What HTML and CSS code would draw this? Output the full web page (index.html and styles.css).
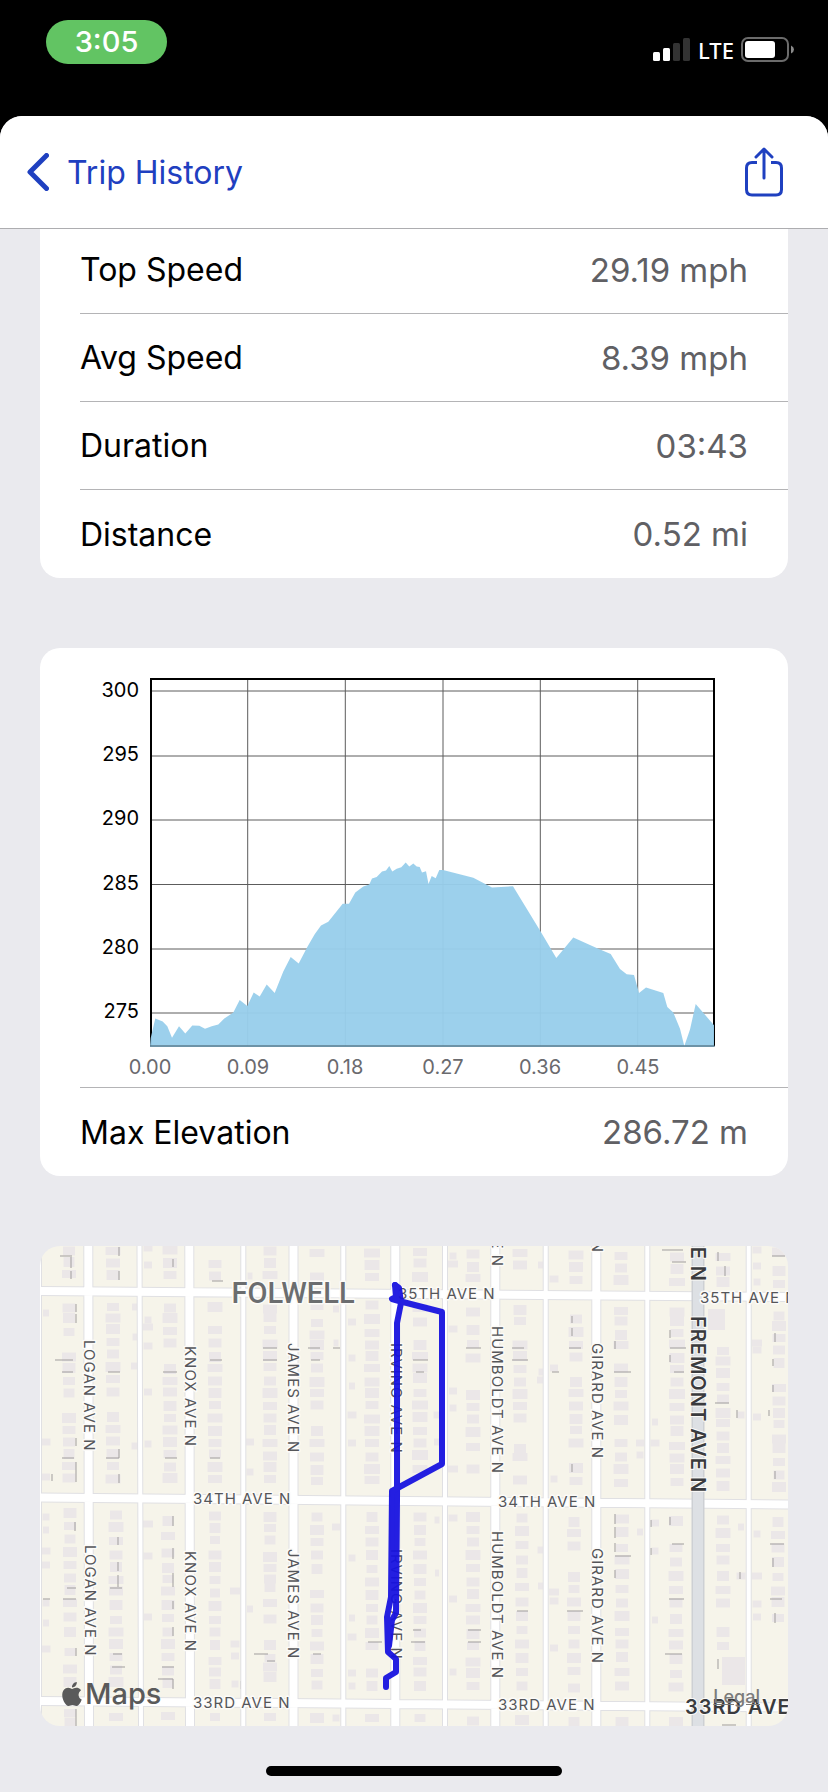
FILE: index.html
```html
<!DOCTYPE html>
<html lang="en">
  <head>
    <meta charset="utf-8" />
    <meta name="viewport" content="width=device-width, initial-scale=1.0" />
    <title>Trip History</title>
    <link rel="stylesheet" href="styles.css">
  </head>
  <body>
    <div class="status-bar">
      <span class="clock">3:05</span>
      <div class="status-icons">
        <svg width="38" height="24" viewBox="0 0 38 24" aria-hidden="true">
          <rect x="0" y="14" width="7" height="9" rx="1.5" fill="#fff" />
          <rect x="10" y="10" width="7" height="13" rx="1.5" fill="#fff" />
          <rect x="20" y="5" width="7" height="18" rx="1.5" fill="#333" />
          <rect x="30" y="0" width="7" height="23" rx="1.5" fill="#333" />
        </svg>
        <span class="network">LTE</span>
        <svg width="53" height="26" viewBox="0 0 53 26" aria-hidden="true">
          <rect x="1" y="1" width="46" height="23" rx="6" fill="none" stroke="#6b6b6b" stroke-width="2" />
          <rect x="4" y="4" width="30" height="17" rx="3" fill="#fff" />
          <path d="M50 8.500q3 1.500 3 4t-3 4z" fill="#8a8a8a" />
        </svg>
      </div>
    </div>

    <div class="sheet">
      <header class="nav">
        <button class="back-button" type="button">
          <svg width="22" height="38" viewBox="0 0 22 38" aria-hidden="true">
            <path d="M19.500 2.500L3 19l16.500 16.500" fill="none" stroke="currentColor" stroke-width="5" stroke-linecap="round" stroke-linejoin="round" />
          </svg>
          <span>Trip History</span>
        </button>
        <button class="share-button" type="button" aria-label="Share">
          <svg width="38" height="50" viewBox="0 0 38 50" fill="none" stroke="currentColor" stroke-width="3" stroke-linecap="round" stroke-linejoin="round" aria-hidden="true">
            <path d="M12 15.500H7q-5.500 0-5.500 5.500v21.500q0 5.500 5.500 5.500h24q5.500 0 5.500-5.500V21q0-5.500-5.500-5.500h-5" stroke-linecap="butt" />
            <path d="M19 31V2.500M11 10l8-8 8 8" />
          </svg>
        </button>
      </header>

      <main class="content">
        <dl class="card stats">
          <div class="row"><dt>Top Speed</dt><dd>29.19 mph</dd></div>
          <div class="row"><dt>Avg Speed</dt><dd>8.39 mph</dd></div>
          <div class="row"><dt>Duration</dt><dd>03:43</dd></div>
          <div class="row"><dt>Distance</dt><dd>0.52 mi</dd></div>
        </dl>

        <section class="card">
          <div class="chart">
            <svg viewBox="40 0 708 439" role="img" aria-label="Elevation over distance">
              <g class="grid">
                <path d="M110 43H674M110 108H674M110 172H674M110 236.500H674M110 301H674M110 365H674" />
                <path d="M207.700 30V398M305.300 30V398M403 30V398M500.300 30V398M597.700 30V398" />
              </g>
              <path class="frame" d="M111 398V31H674V398" />
              <path class="area" d="M110 399L110.700 390L115.300 370.500L122.700 373.600L127.300 378.200L132 389.800L139 378.200L145.300 385.600L152.300 377.500L159.300 377.800L165 380.700L171.700 378.200L178.300 376.400L184.300 370.500L193.300 364.500L199.700 351.900L207.300 357.900L213.700 344.500L219.700 348.400L226.700 336.500L234.700 344.900L243.300 323.500L250.700 309.100L258.700 315.400L267.300 298.900L274.700 286.300L281 277.500L288.300 273.700L295.300 264.900L302.700 255.800L309 255.800L315.300 244.600L323.300 238.600L329.300 236.500L332 230.500L336.700 229.100L342 223.500L346 222.500L349.300 217.900L352.300 223.500L356.700 220.700L361.300 219.300L365.700 214.400L369.300 218.600L373.300 215.400L376.700 218.600L379.700 219L382 224.600L386 223.200L388.500 236L391.700 228L395.700 230.200L399.300 222.100L403 222.100L433.300 229.800L452 239.600L473 238.200L500.300 283.100L516.300 310.100L533.300 289.500L558.300 300.700L570.700 305.900L580 321L586.700 326.300L594 327L599 344.900L606 339.600L623.300 344.900L627.300 358.900L633.300 364.500L640 380.700L644.300 398L650 381.400L655.700 356.100L674 377.200V399Z" />
              <path class="baseline" d="M110 398H675" />
              <g class="y-labels">
                <text x="99" y="49">300</text>
                <text x="99" y="113">295</text>
                <text x="99" y="177">290</text>
                <text x="99" y="242">285</text>
                <text x="99" y="306">280</text>
                <text x="99" y="370">275</text>
              </g>
              <g class="x-labels">
                <text x="110" y="426">0.00</text>
                <text x="208" y="426">0.09</text>
                <text x="305" y="426">0.18</text>
                <text x="403" y="426">0.27</text>
                <text x="500" y="426">0.36</text>
                <text x="598" y="426">0.45</text>
              </g>
            </svg>
          </div>
          <dl class="row"><dt>Max Elevation</dt><dd>286.72 m</dd></dl>
        </section>

        <section class="card map">
          <svg class="map-canvas" viewBox="0 0 748 480" role="img" aria-label="Trip route">
            <g id="houses"></g>
            <path class="shadows" d="M20 10h12M31 11v11M31 25v8M36 58v8M36 68v9M15 114h18M22 126h11M22 212h12M36 192v8M36 216v20M79 1v9M79 25v9M68 126h12M79 203v9M66 212h13M79 228v9M133 13v8M123 126h14M125 212h12M170 114h12M170 212h10M172 35h11M223 102h14M223 114h14M12 228v7
              M268 102h12M271 114h9M293 102h7M373 114h15M376 126h8M426 102h15M472 102h12M472 114h16M512 126h7
              M622 4h21M632 16h14M529 102h12M630 102h16M574 126h17M675 157h14M732 10h13M634 126h10M532 70v7M532 82v8M575 95v8M630 84v8M630 109v7M678 6v9M685 20v10M735 87v9M733 113v7M733 139v7M697 164v8M729 164v6M735 225v8M532 218v8
              M35 276v9M27 342h9M23 353h13M36 402v8M78 291v8M78 316v9M78 329v12M70 342h12M133 270v10M133 302v11M133 327v14M133 355v8M133 381v9M73 408h9M72 421h13M122 421h12M118 433h15M133 433v10M201 435v8M214 408h14M227 415h8M36 463v17M3 353h7
              M273 408h8M328 396h14M373 384h8M371 396h14M428 384h13M428 396h13M477 365h11
              M575 268v10M575 281v11M575 297v9M575 310h16M575 324v8M527 365h16M632 298h12M629 353h15M625 408h17M730 298h14M730 353h12M735 367v10M733 312v9M678 413v10M630 271v8M611 274v7M611 302v7M700 326v7M682 479h14" />
            <defs>
              <path id="streets" d="M0 45L748 51M0 251.500L748 258.500M0 455L748 461.500M48.300 0L49 480M149.300 0L150 480M253.500 0V480M355.300 0V480M455.300 0V480M556.300 0V480" />
              <path id="alleys" d="M-1 0V480M99.500 0L101 480M203.300 0V480M303.300 0V480M405 0V480M505.700 0V480M607.300 0V480M708.700 0V480" />
            </defs>
            <use href="#alleys" class="alley-edge" />
            <use href="#streets" class="street-edge" />
            <use href="#alleys" class="alley" />
            <use href="#streets" class="street" />
            <path class="avenue-edge" d="M658 0V480" />
            <path class="avenue" d="M658 0V480" />

            <g class="street-labels">
              <text transform="translate(44 94) rotate(90)">LOGAN AVE N</text>
              <text transform="translate(45 299) rotate(90)">LOGAN AVE N</text>
              <text transform="translate(145 100) rotate(90)">KNOX AVE N</text>
              <text transform="translate(145 305) rotate(90)">KNOX AVE N</text>
              <text transform="translate(248 97) rotate(90)">JAMES AVE N</text>
              <text transform="translate(248 303) rotate(90)">JAMES AVE N</text>
              <text transform="translate(351 97) rotate(90)">IRVING AVE N</text>
              <text transform="translate(351 303) rotate(90)">IRVING AVE N</text>
              <text transform="translate(452 21) rotate(90)" text-anchor="end">HUMBOLDT AVE N</text>
              <text transform="translate(452 80) rotate(90)">HUMBOLDT AVE N</text>
              <text transform="translate(452 285) rotate(90)">HUMBOLDT AVE N</text>
              <text transform="translate(552 7) rotate(90)" text-anchor="end">GIRARD AVE N</text>
              <text transform="translate(552 97) rotate(90)">GIRARD AVE N</text>
              <text transform="translate(552 302) rotate(90)">GIRARD AVE N</text>
              <text x="358" y="53">35TH AVE N</text>
              <text x="660" y="57">35TH AVE N</text>
              <text x="153" y="258">34TH AVE N</text>
              <text x="458" y="261">34TH AVE N</text>
              <text x="153" y="462">33RD AVE N</text>
              <text x="458" y="464">33RD AVE N</text>
            </g>
            <g class="major-labels">
              <text transform="translate(651 36) rotate(90)" text-anchor="end">FREMONT AVE N</text>
              <text transform="translate(651 70) rotate(90)">FREMONT AVE N</text>
              <text x="645" y="468">33RD AVE N</text>
            </g>
            <text class="district" x="253" y="57">FOLWELL</text>

            <g class="route">
              <path d="M355 39L359 42L361 57L357 77V254L356 367L352 374L349 400" />
              <path d="M355 39L356 51L352 53L359 55L402 66V218L352 245L351 351L347 371L348 406L356 413V426L346 432V441" />
            </g>
          </svg>
          <div class="map-logo">
            <svg width="24" height="24" viewBox="0 0 24 24" fill="currentColor" aria-hidden="true">
              <path d="M12.152 6.896c-.948 0-2.415-1.078-3.960-1.040-2.040.027-3.910 1.183-4.961 3.014-2.117 3.675-.546 9.103 1.519 12.090 1.013 1.454 2.208 3.090 3.792 3.039 1.520-.065 2.090-.987 3.935-.987 1.831 0 2.350.987 3.960.948 1.637-.026 2.676-1.480 3.676-2.948 1.156-1.688 1.636-3.325 1.662-3.415-.039-.013-3.182-1.221-3.220-4.857-.026-3.040 2.480-4.494 2.597-4.559-1.429-2.090-3.623-2.324-4.390-2.376-2-.156-3.675 1.090-4.610 1.090zM15.530 3.830c.843-1.012 1.400-2.427 1.245-3.830-1.207.052-2.662.805-3.532 1.818-.780.896-1.454 2.338-1.273 3.714 1.338.104 2.715-.688 3.559-1.701" />
            </svg>
            <span>Maps</span>
          </div>
          <a class="legal" href="#legal">Legal</a>
        </section>
      </main>

      <div class="home-indicator"></div>
    </div>

    <script src="map.js"></script>
  </body>
</html>
```
FILE: styles.css
```css
* {
  padding: 0;
  margin: 0;
  box-sizing: border-box;
}
body {
  min-height: 100vh;
  background-color: #000000;
  font-family: "Inter", "Liberation Sans", sans-serif;
  display: flex;
  flex-direction: column;
}
button {
  border: none;
  background: none;
  color: #1f40c0;
  font: inherit;
  cursor: pointer;
}
svg {
  display: block;
}

/* Status bar */
.status-bar {
  height: 116px;
  padding: 20px 34px 0 46px;
  display: flex;
  justify-content: space-between;
  align-items: flex-start;
  color: #ffffff;
}
.clock {
  width: 121px;
  height: 44px;
  border-radius: 22px;
  background-color: #62c463;
  font-size: 29px;
  font-weight: 500;
  line-height: 44px;
  text-align: center;
}
.status-icons {
  display: flex;
  align-items: center;
  gap: 7px;
  margin-top: 16px;
}
.network {
  font-family: "Noto Sans", sans-serif;
  font-size: 22px;
  font-weight: 500;
  line-height: 28px;
}

/* Sheet and navigation */
.sheet {
  flex: 1;
  background-color: #eaeaee;
  border-radius: 22px 22px 0 0;
  overflow: hidden;
}
.nav {
  position: relative;
  z-index: 1;
  height: 113px;
  padding: 0 45px 0 27px;
  display: flex;
  justify-content: space-between;
  align-items: center;
  background-color: #ffffff;
  border-bottom: 1px solid #adadb0;
}
.back-button {
  display: flex;
  align-items: center;
  gap: 18px;
  font-size: 32px;
}

/* Cards */
.content {
  display: flex;
  flex-direction: column;
  gap: 70px;
  padding: 0 40px 40px;
}
.card {
  background-color: #ffffff;
  border-radius: 20px;
  overflow: hidden;
}
/* first row is scrolled slightly under the nav bar */
.stats {
  margin-top: -3px;
  border-radius: 0 0 20px 20px;
}
.row {
  height: 88px;
  margin-left: 40px;
  padding-right: 40px;
  display: flex;
  justify-content: space-between;
  align-items: center;
  border-bottom: 1px solid #b4b4b6;
  font-size: 32px;
  color: #000000;
}
.row:last-child {
  border-bottom: none;
}
.row dd {
  font-size: 33px;
  color: #606064;
}

/* Elevation chart */
.chart {
  margin-left: 40px;
  border-bottom: 1px solid #b4b4b6;
}
.chart text {
  font-size: 20px;
}
.grid path {
  fill: none;
  stroke: #5c5c5c;
  stroke-width: 1;
}
.frame {
  fill: none;
  stroke: #000000;
  stroke-width: 2;
}
.area {
  fill: #98ceeb;
  fill-opacity: 0.96;
}
.baseline {
  stroke: #3f5663;
  stroke-width: 1;
}
.y-labels {
  text-anchor: end;
  fill: #000000;
}
.x-labels {
  text-anchor: middle;
  fill: #6a6a6e;
}

/* Map */
.map {
  position: relative;
  background-color: #f6f4ea;
}
#houses {
  fill: #ebe7e8;
}
.shadows {
  fill: none;
  stroke: #a09d9d;
  stroke-width: 1;
}
.street-edge,
.alley-edge {
  fill: none;
  stroke: #e0e0e3;
}
.street,
.alley {
  fill: none;
  stroke: #ffffff;
}
.street-edge {
  stroke-width: 10;
}
.street {
  stroke-width: 8;
}
.alley-edge {
  stroke-width: 6;
}
.alley {
  stroke-width: 4;
}
.avenue-edge {
  stroke: #cdd0d4;
  stroke-width: 13;
}
.avenue {
  stroke: #dde0e4;
  stroke-width: 10;
}
.street-labels,
.major-labels,
.district {
  paint-order: stroke;
  stroke: #fcfbf8;
  stroke-width: 3;
  stroke-linejoin: round;
}
.street-labels,
.major-labels {
  letter-spacing: 1px;
}
.street-labels {
  font-size: 15px;
  fill: #55565a;
}
.major-labels {
  font-size: 20px;
  font-weight: 600;
  stroke-width: 2;
  fill: #3a3b3e;
}
.district {
  font-family: "Roboto", sans-serif;
  font-size: 29px;
  font-weight: 500;
  text-anchor: middle;
  fill: #6b6d6f;
}
.route {
  opacity: 0.94;
}
.route path {
  fill: none;
  stroke: #1712e0;
  stroke-width: 6;
  stroke-linecap: round;
  stroke-linejoin: round;
}
.map-logo {
  position: absolute;
  left: 20px;
  bottom: 14px;
  display: flex;
  align-items: center;
  gap: 1px;
  color: #5a5a5a;
  font-size: 29px;
  font-weight: 500;
  line-height: 36px;
}
.legal {
  position: absolute;
  right: 28px;
  bottom: 17px;
  color: #7b7b7a;
  font-size: 18px;
  font-weight: 500;
  line-height: 24px;
}

.home-indicator {
  width: 296px;
  height: 10px;
  margin: 0 auto 16px;
  border-radius: 5px;
  background-color: #000000;
}
```
FILE: map.js
```js
// columns of houses: center x, width, list of center y
const columns = [
  [6, 7, [67, 196, 231, 271, 284, 305, 319, 357, 377, 403]],
  [29, 12, [5, 16, 28, 62, 72, 86, 111, 122, 135, 147, 172, 184, 196, 208, 220, 232]],
  [30, 12, [267, 280, 293, 306, 319, 332, 344, 357, 371, 386, 406, 423, 436, 467, 476]],
  [73, 13, [5, 17, 29, 61, 72, 83, 96, 108, 121, 133, 146, 171, 183, 195, 208, 220, 233]],
  [76, 13, [269, 281, 295, 309, 321, 334, 345, 359, 374, 386, 398, 411, 424, 436, 471]],
  [95, 6, [61, 91, 120, 200]],
  [108, 8, [2, 19, 74, 81, 100, 146, 198, 278, 310, 371]],
  [130, 13, [4, 17, 29, 62, 72, 85, 97, 123, 135, 146, 160, 172, 184, 196, 208, 221, 232]],
  [128, 12, [275, 290, 307, 322, 333, 345, 359, 372, 386, 398, 411, 425, 437, 470]],
  [175, 13, [18, 30, 61, 84, 97, 111, 122, 135, 147, 159, 172, 185, 197, 208, 221, 233]],
  [175, 11, [270, 282, 294, 309, 321, 334, 347, 360, 374, 386, 399, 415, 426, 438, 471]],
  [195, 8, [345, 398, 410, 438]],
  [210, 6, [30, 196, 226, 363]],
  [230, 13, [5, 17, 29, 63, 71, 84, 98, 110, 121, 135, 147, 160, 172, 184, 197, 210, 221, 233]],
  [230, 12, [271, 282, 294, 311, 322, 333, 341, 357, 373, 399, 412, 421, 431, 471]],
  [277, 13, [7, 31, 59, 77, 89, 99, 110, 122, 136, 147, 159, 185, 197, 211, 224, 235]],
  [277, 12, [271, 284, 296, 309, 323, 348, 362, 374, 387, 400, 413, 427, 439, 472]],
  [296, 6, [63, 97, 281, 472]],
  [312, 7, [76, 112, 140, 169, 197, 312, 372, 391, 427, 440]],
  [332, 14, [7, 19, 31, 59, 73, 87, 99, 110, 122, 136, 147, 159, 173, 185, 197, 211, 223, 234]],
  [332, 12, [271, 284, 296, 309, 323, 336, 349, 362, 374, 387, 400, 427, 440, 472]],
  [380, 14, [6, 17, 31, 62, 76, 99, 110, 122, 132, 147, 159, 171, 185, 197, 209, 223]],
  [380, 12, [271, 284, 296, 309, 323, 336, 349, 362, 374, 387, 400, 415, 426, 440, 472]],
  [397, 5, [169, 196, 274, 327]],
  [413, 8, [10, 18, 83, 145, 162, 223, 272, 353, 426]],
  [433, 13, [8, 21, 32, 66, 84, 98, 112, 149, 161, 173, 186, 201, 223]],
  [433, 13, [271, 284, 296, 309, 322, 336, 348, 362, 374, 388, 400, 416, 427, 440, 475]],
  [480, 13, [7, 19, 64, 75, 99, 110, 123, 136, 148, 160, 172, 203, 211, 234]],
  [482, 12, [272, 285, 299, 314, 327, 341, 356, 370, 384, 398, 412, 426, 440, 474]],
  [501, 6, [19, 126, 134, 304, 340]],
  [514, 8, [33, 122, 233, 346, 355, 402]],
  [536, 13, [9, 21, 34, 73, 86, 99, 111, 136, 147, 160, 173, 184, 197, 222, 235]],
  [534, 12, [276, 287, 300, 331, 343, 356, 370, 384, 398, 412, 425, 442, 476]],
  [581, 13, [10, 22, 34, 65, 75, 89, 99, 122, 136, 148, 160, 174, 197, 211, 223, 237]],
  [582, 13, [273, 286, 302, 314, 328, 343, 357, 370, 386, 398, 411, 426, 440, 476]],
  [600, 6, [197, 209, 286]],
  [615, 7, [176, 197, 277, 305, 374]],
  [637, 14, [11, 23, 36, 66, 75, 87, 98, 112, 123, 136, 148, 161, 174, 185, 200, 212, 223, 236]],
  [636, 13, [275, 302, 316, 330, 344, 357, 373, 387, 399, 413, 428, 441, 476]],
  [683, 13, [11, 25, 36, 105, 115, 127, 141, 153, 167, 177, 190, 202, 214, 227, 240]],
  [683, 13, [274, 287, 302, 314, 330, 344, 357, 386, 400]],
  [701, 7, [169, 281, 330]],
  [717, 8, [4, 20, 36, 97, 104, 171, 288, 330, 358, 371]],
  [739, 12, [6, 25, 38, 70, 80, 92, 104, 117, 142, 155, 167, 178, 193, 202, 216, 229, 241]],
  [738, 12, [276, 289, 302, 316, 331, 345, 356, 372]],
];

const houses = document.getElementById("houses");

function addHouse(x, y, width, height) {
  const rect = document.createElementNS("http://www.w3.org/2000/svg", "rect");
  rect.setAttribute("x", x);
  rect.setAttribute("y", y);
  rect.setAttribute("width", width);
  rect.setAttribute("height", height);
  houses.appendChild(rect);
}

columns.forEach(([center, width, list], c) => {
  list.forEach((y, i) => {
    const w = width + ((i * 3 + c) % 4) - 1;
    const h = width < 9 ? 7 : 8 + ((i + c) % 3);
    addHouse(center - w / 2, y - h / 2, w, h);
  });
});

// larger buildings
addHouse(668, 63, 17, 21);
addHouse(682, 411, 23, 28);
```
